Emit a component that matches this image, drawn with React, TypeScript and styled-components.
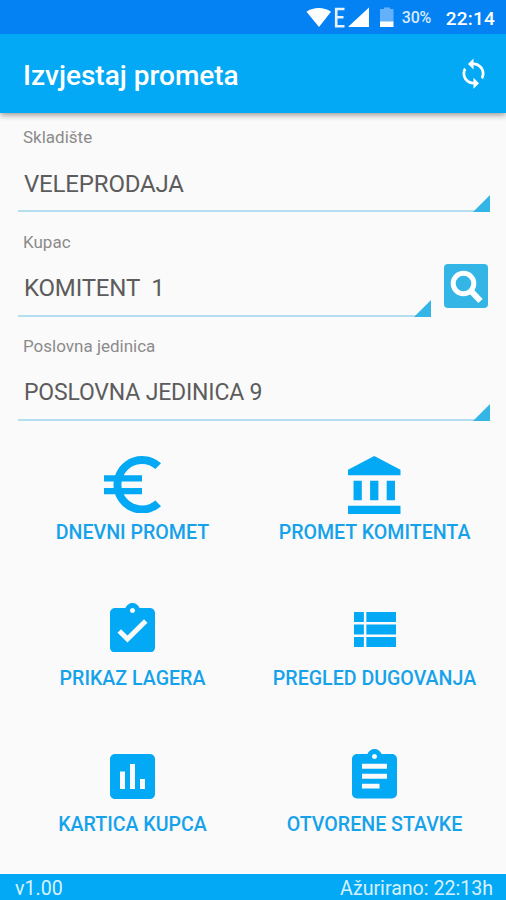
import React from 'react';
import styled, { createGlobalStyle } from 'styled-components';

const GlobalStyle = createGlobalStyle`
  * { box-sizing: border-box; }
  body { margin: 0; background: #fafafa; font-family: Roboto, "Liberation Sans", sans-serif; }
`;

const Screen = styled.div`
  width: 506px;
  height: 900px;
  display: flex;
  flex-direction: column;
  background: #fafafa;
  overflow: hidden;
`;

const StatusBar = styled.div`
  flex: none;
  z-index: 1;
  height: 34px;
  padding: 1px 11px 0 0;
  display: flex;
  align-items: center;
  justify-content: flex-end;
  background: #0482f4;
  color: #fff;
`;

const StatusIcons = styled.svg`
  width: 90px;
  height: 24px;
  margin-right: 7px;
`;

const Battery = styled.span`
  width: 31px;
  margin-right: 13px;
  font-size: 16px;
  font-weight: 500;
  letter-spacing: -0.2px;
  color: #d6eafe;
`;

const Clock = styled.span`
  padding-top: 1px;
  font-size: 19px;
  font-weight: 500;
  letter-spacing: 0.2px;
`;

const AppBar = styled.header`
  flex: none;
  height: 79px;
  padding: 3px 16px 0 23px;
  display: flex;
  align-items: center;
  justify-content: space-between;
  background: #03a9f4;
  color: #fff;
  box-shadow: 0 2px 6px rgba(0, 0, 0, 0.4);
`;

const Title = styled.h1`
  margin: 0;
  font-size: 28px;
  font-weight: 500;
`;

const Glyph = styled.svg`
  display: block;
  flex: none;
  fill: currentColor;
`;

const SyncGlyph = styled(Glyph)`
  margin-bottom: 4px;
`;

const Form = styled.main`
  flex: none;
  padding: 14.4px 16px 0 18px;
`;

const Field = styled.div`
  height: 104.4px;
`;

const FieldLabel = styled.div`
  height: 20px;
  padding-left: 5px;
  line-height: 20px;
  font-size: 17px;
  color: #8b8b8b;
`;

const FieldRow = styled.div`
  display: flex;
  align-items: flex-start;
  gap: 13px;
`;

const Spinner = styled.div`
  flex: 1;
  height: 65px;
  display: flex;
  align-items: flex-end;
  justify-content: space-between;
  border-bottom: 2px solid #b5dff0;
`;

const SpinnerValue = styled.span<{ $size: number }>`
  padding: 0 0 12.6px 6px;
  line-height: 28px;
  font-size: ${(p) => p.$size}px;
  font-weight: 400;
  letter-spacing: -0.17px;
  white-space: pre;
  color: #5c5c5c;
`;

const Corner = styled.svg`
  width: 17px;
  height: 17px;
  margin-bottom: -2px;
  fill: #33b5e5;
`;

const SearchButton = styled.button`
  width: 44px;
  height: 44px;
  margin: 12px 2px 0 0;
  padding: 0;
  border: 0;
  border-radius: 4px;
  background: #33b5e5;
  color: #fff;
`;

const Grid = styled.section`
  display: grid;
  grid-template-columns: 242px 242px;
  grid-template-rows: 146px 146px 1fr;
  justify-content: center;
  padding: 13px 0 0 1px;
  flex: 1;
  min-height: 0;
`;

const Tile = styled.div`
  display: flex;
  flex-direction: column;
  align-items: center;
  color: #03a9f4;
`;

const TileIcon = styled.div<{ $drop: number }>`
  height: 67.4px;
  padding-top: ${(p) => p.$drop}px;
`;

const TileLabel = styled.div`
  line-height: 24px;
  font-size: 19.6px;
  font-weight: 500;
  white-space: nowrap;
  color: #16a2ea;
`;

const Footer = styled.footer`
  flex: none;
  height: 26px;
  padding: 2px 13px 0 15px;
  display: flex;
  align-items: center;
  justify-content: space-between;
  font-size: 19.6px;
  background: #03a9f4;
  color: #d9f1fd;
`;

const fields = [
  { label: 'Skladište', value: 'VELEPRODAJA', size: 24, search: false },
  { label: 'Kupac', value: 'KOMITENT  1', size: 24, search: true },
  { label: 'Poslovna jedinica', value: 'POSLOVNA JEDINICA 9', size: 23, search: false },
];

const tiles = [
  {
    label: 'DNEVNI PROMET', box: '3 3 18 18', w: 57, h: 57.5, drop: 2,
    d: 'M15 18.5c-2.51 0-4.68-1.42-5.76-3.5H15v-2H8.58c-.05-.33-.08-.66-.08-1s.03-.67.08-1H15V9H9.24C10.32 6.92 12.5 5.5 15 5.5c1.61 0 3.09.59 4.23 1.57L21 5.3C19.41 3.87 17.3 3 15 3c-3.92 0-7.24 2.51-8.48 6H3v2h3.06c-.04.33-.06.66-.06 1s.02.67.06 1H3v2h3.52c1.24 3.49 4.56 6 8.48 6 2.31 0 4.41-.87 6-2.3l-1.78-1.77c-1.13.98-2.6 1.57-4.22 1.57z',
  },
  {
    label: 'PROMET KOMITENTA', box: '2 1 19 21', w: 52.5, h: 58, drop: 2,
    d: 'M4 10v7h3v-7H4zm6 0v7h3v-7h-3zM2 22h19v-3H2v3zm14-12v7h3v-7h-3zm-4.5-9L2 6v2h19V6l-9.5-5z',
  },
  {
    label: 'PRIKAZ LAGERA', box: '3 1 18 20', w: 45, h: 49.5, drop: 3,
    d: 'M19 3h-4.18C14.4 1.84 13.3 1 12 1c-1.3 0-2.4.84-2.82 2H5c-1.1 0-2 .9-2 2v14c0 1.1.9 2 2 2h14c1.1 0 2-.9 2-2V5c0-1.1-.9-2-2-2zm-7 0c.55 0 1 .45 1 1s-.45 1-1 1-1-.45-1-1 .45-1 1-1zm-2 14l-4-4 1.41-1.41L10 14.17l6.59-6.59L18 9l-8 8z',
  },
  {
    label: 'PREGLED DUGOVANJA', box: '4 5 17 14', w: 42, h: 35, drop: 12.5,
    d: 'M4 14h4v-4H4v4zm0 5h4v-4H4v4zM4 9h4V5H4v4zm5 5h12v-4H9v4zm0 5h12v-4H9v4zM9 5v4h12V5H9z',
  },
  {
    label: 'KARTICA KUPCA', box: '3 3 18 18', w: 45, h: 45, drop: 8,
    d: 'M19 3H5c-1.1 0-2 .9-2 2v14c0 1.1.9 2 2 2h14c1.1 0 2-.9 2-2V5c0-1.1-.9-2-2-2zM9 17H7v-7h2v7zm4 0h-2V7h2v10zm4 0h-2v-4h2v4z',
  },
  {
    label: 'OTVORENE STAVKE', box: '3 1 18 20', w: 45, h: 49.5, drop: 3.5,
    d: 'M19 3h-4.18C14.4 1.84 13.3 1 12 1c-1.3 0-2.4.84-2.82 2H5c-1.1 0-2 .9-2 2v14c0 1.1.9 2 2 2h14c1.1 0 2-.9 2-2V5c0-1.1-.9-2-2-2zm-7 0c.55 0 1 .45 1 1s-.45 1-1 1-1-.45-1-1 .45-1 1-1zm2 14H7v-2h7v2zm3-4H7v-2h10v2zm0-4H7V7h10v2z',
  },
];

export default function App() {
  return (
    <>
      <GlobalStyle />
      <Screen>
        <StatusBar>
          <StatusIcons viewBox="0 0 90 24">
            <path d="M1.500 5.700C8.500 0.700 19 0.700 26 5.700L14 21z" fill="#fff" />
            <path d="M39.500 3H31.200v17.200h8.300M31 11.300h7.500" fill="none" stroke="#e6f2ff" strokeWidth="2.600" />
            <path d="M64 1.500v19.500H43z" fill="#fff" />
            <path d="M79 1.500h6v1.500h3.500V16H75V3h4z" fill="#62b1fa" />
            <path d="M75 15.500h13.500v5.500H75z" fill="#fff" />
          </StatusIcons>
          <Battery>30%</Battery>
          <Clock>22:14</Clock>
        </StatusBar>
        <AppBar>
          <Title>Izvjestaj prometa</Title>
          <SyncGlyph width="33" height="33" viewBox="0 0 24 24">
            <path d="M12 4V1L8 5l4 4V6c3.310 0 6 2.690 6 6 0 1.010-.25 1.970-.7 2.800l1.460 1.460C19.540 15.030 20 13.570 20 12c0-4.420-3.580-8-8-8zm0 14c-3.310 0-6-2.690-6-6 0-1.010.25-1.970.7-2.800L5.240 7.740C4.460 8.970 4 10.430 4 12c0 4.420 3.580 8 8 8v3l4-4-4-4v3z" />
          </SyncGlyph>
        </AppBar>
        <Form>
          {fields.map((f) => (
            <Field key={f.label}>
              <FieldLabel>{f.label}</FieldLabel>
              <FieldRow>
                <Spinner>
                  <SpinnerValue $size={f.size}>{f.value}</SpinnerValue>
                  <Corner viewBox="0 0 17 17"><path d="M17 0v17H0z" /></Corner>
                </Spinner>
                {f.search && (
                  <SearchButton aria-label="Kupac">
                    <Glyph width="44" height="44" viewBox="0 0 44 44">
                      <circle cx="19.500" cy="19.500" r="10.300" fill="none" stroke="#fff" strokeWidth="5" />
                      <path d="M27 27l9.500 10" fill="none" stroke="#fff" strokeWidth="6" />
                    </Glyph>
                  </SearchButton>
                )}
              </FieldRow>
            </Field>
          ))}
        </Form>
        <Grid>
          {tiles.map((t) => (
            <Tile key={t.label}>
              <TileIcon $drop={t.drop}>
                <Glyph width={t.w} height={t.h} viewBox={t.box} preserveAspectRatio="none">
                  <path d={t.d} />
                </Glyph>
              </TileIcon>
              <TileLabel>{t.label}</TileLabel>
            </Tile>
          ))}
        </Grid>
        <Footer>
          <span>v1.00</span>
          <span>Ažurirano: 22:13h</span>
        </Footer>
      </Screen>
    </>
  );
}
